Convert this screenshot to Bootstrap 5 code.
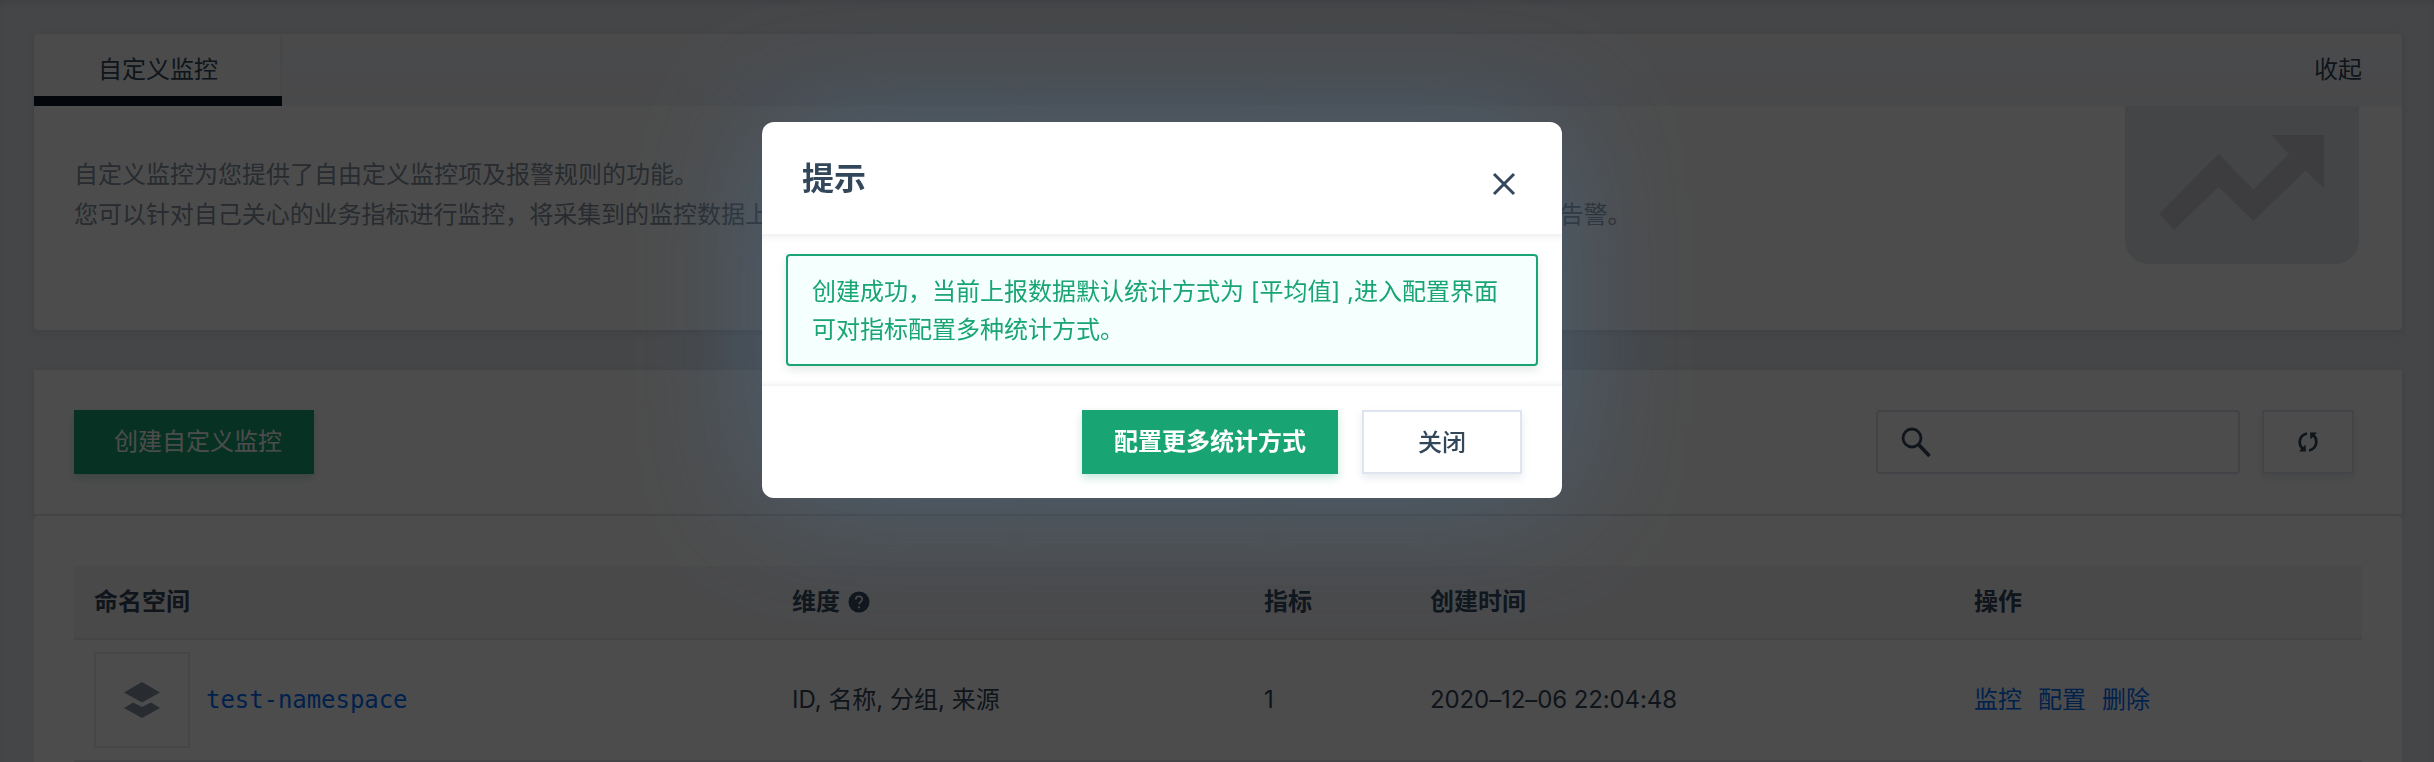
<!DOCTYPE html>
<html lang="zh-CN">
<head>
<meta charset="utf-8">
<title>自定义监控</title>
<link rel="stylesheet" href="https://cdn.jsdelivr.net/npm/bootstrap@5.3.0/dist/css/bootstrap.min.css">
<style>
body{font-family:"Inter","Noto Sans CJK SC",sans-serif;font-size:24px;line-height:40px;color:#33475b;background:#e6e9ee;height:762px;overflow:hidden}
.page-area{padding:34px 32px 0 34px;box-shadow:inset 0 4px 6px -2px rgba(30,50,80,.12)}
.panel{background:#fff;border-radius:4px;box-shadow:0 2px 6px rgba(30,50,80,.12);overflow:hidden}
.intro{height:296px;margin-bottom:40px}
.intro-head{height:72px;background:linear-gradient(#f8f9fb,#f2f4f9)}
.tab-on{width:248px;background:#fafbfc;border-right:2px solid #eceef2;position:relative;line-height:72px;padding-left:2px}
.tab-on::after{content:"";position:absolute;left:0;right:-2px;bottom:0;height:10px;background:#0d1828}
.fold{padding-right:40px;line-height:72px}
.intro-text{padding-left:40px;padding-top:49px;color:#8592a0}
.long-line{letter-spacing:-.04px}
.trend{width:234px;height:158px;margin-right:43px}
.toolbar-row{height:146px;border-bottom:2px solid #dfe3ea;padding:0 48px 0 40px;border-radius:0}
.btn-box{height:64px;border-radius:0;font-size:24px;line-height:24px;padding:0}
.btn-go{background:#18a573;color:#fff;box-shadow:0 4px 8px rgba(24,165,115,.25)}
.btn-plain{background:#fff;color:#33475b;border:2px solid #dfe5ee;box-shadow:0 4px 8px rgba(60,80,120,.12)}
.search-box{width:364px;height:64px;border:2px solid #dddfea;border-radius:4px;padding-left:22px}
.list-panel{height:246px;padding:50px 40px 0;box-shadow:none;border-bottom-left-radius:0;border-bottom-right-radius:0}
.grid-row{display:grid;grid-template-columns:698px 472px 166px 544px 1fr;align-items:center;padding-left:20px;border-bottom:2px solid #e3e6ea}
.grid-head{height:74px;background:#f3f5f9;font-weight:600}
.grid-item{height:122px}
.ns-icon{width:96px;height:96px;border:2px solid #e8eaee}
.ns-link{font-family:"DejaVu Sans Mono",monospace;margin-left:16px;letter-spacing:-.06px}
.grid-row a{color:#006eff;text-decoration:none}
.stamp{letter-spacing:-.1px}
.mask{background:rgba(0,0,0,.7)}
.dialog-pos{left:762px;top:122px;width:800px}
.dialog-box{height:376px;border:0;border-radius:12px;box-shadow:0 0 128px rgba(75,114,152,.54);color:#33475b;overflow:visible}
.dialog-head{height:112px;padding:2px 46px 0 40px}
.dialog-mid{height:152px;padding:20px 24px;box-shadow:inset 0 8px 8px -6px rgba(0,0,0,.08),inset 0 -6px 6px -5px rgba(0,0,0,.08)}
.dialog-foot{height:112px;padding:0 40px;gap:24px}
.notice{height:112px;border:2px solid #18a573;border-radius:4px;background:#f5fffd;color:#18a573;padding:17px 24px;line-height:38px;box-shadow:0 4px 8px rgba(24,80,60,.12);white-space:nowrap}
.title-text{font-size:32px;font-weight:600}
</style>
<script src="https://cdn.jsdelivr.net/npm/bootstrap@5.3.0/dist/js/bootstrap.bundle.min.js"></script>
</head>
<body>
<div class="page-area">
  <section class="panel intro">
    <div class="intro-head d-flex justify-content-between">
      <div class="tab-on text-center">自定义监控</div>
      <div class="fold">收起</div>
    </div>
    <div class="d-flex justify-content-between">
      <div class="intro-text text-nowrap">自定义监控为您提供了自由定义监控项及报警规则的功能。<br><span class="long-line">您可以针对自己关心的业务指标进行监控，将采集到的监控数据上报至云监控平台，并为已上报的监控指标设置相应的报警规则，来接收异常告警。</span></div>
      <svg class="trend" viewBox="0 0 234 158"><rect y="-76" width="234" height="234" rx="24" fill="#e3e6ea"/><path fill="#cccdd2" d="M34 108 93.500 48 128.500 83.500 164 48 146 29H199V82L180.500 64.500 128.500 115 93.500 81 49 124Z"/></svg>
    </div>
  </section>
  <section class="panel toolbar-row d-flex align-items-center">
    <button class="btn btn-box btn-go" style="width:240px;padding-left:8px">创建自定义监控</button>
    <div class="search-box ms-auto d-flex align-items-center">
      <svg width="32" height="32" viewBox="0 0 32 32" fill="none" stroke="#33475b"><circle cx="12" cy="12" r="9" stroke-width="2.800"/><path d="m18.500 18.500 11 11.500" stroke-width="3.600"/></svg>
    </div>
    <button class="btn btn-box btn-plain d-flex align-items-center justify-content-center" style="width:92px;margin-left:22px">
      <svg width="20" height="20" viewBox="0 0 20 20" fill="none" stroke="#33475b" stroke-width="2.800"><path d="M9 1.500C1.500 3 -.5 11.500 4.500 17"/><path d="M11 18.500C18.500 17 20.500 8.500 15.500 3"/><path fill="#33475b" stroke="none" d="M12 .5h7L12.500 7.500ZM8 19.500H1L7.500 12.500Z"/></svg>
    </button>
  </section>
  <section class="panel list-panel">
    <div class="grid-row grid-head">
      <div>命名空间</div>
      <div class="d-flex align-items-center">维度<svg class="ms-2" width="22" height="22" viewBox="0 0 22 22"><circle cx="11" cy="11" r="10.500" fill="#33475b"/><path d="M7.800 8.500c0-4.300 6.500-4.200 6.500-.2 0 2.500-3.200 2.600-3.200 5" fill="none" stroke="#f3f5f9" stroke-width="1.600"/><circle cx="11" cy="16.300" r="1.100" fill="#f3f5f9"/></svg></div>
      <div>指标</div><div>创建时间</div><div>操作</div>
    </div>
    <div class="grid-row grid-item">
      <div class="d-flex align-items-center">
        <div class="ns-icon d-flex align-items-center justify-content-center"><svg width="36" height="36" viewBox="0 0 36 36" fill="#8592a0"><path d="M18 0 36 10.500 18 20.500 0 10.500ZM0 26 9 20.500 18 25 27 20.500 36 26 18 36Z"/></svg></div>
        <a href="#" class="ns-link">test-namespace</a>
      </div>
      <div>ID, 名称, 分组, 来源</div><div>1</div><div class="stamp">2020–12–06 22:04:48</div>
      <div class="d-flex gap-3"><a href="#">监控</a><a href="#">配置</a><a href="#">删除</a></div>
    </div>
  </section>
</div>
<div class="mask position-fixed top-0 start-0 w-100 h-100"></div>
<div class="dialog-pos position-fixed">
  <div class="modal-content dialog-box bg-white">
    <div class="dialog-head d-flex align-items-center justify-content-between">
      <div class="title-text">提示</div>
      <svg width="24" height="24" viewBox="0 0 24 24" stroke="#33475b" stroke-width="3" style="margin-top:10px"><path d="m2 2 20 20M22 2 2 22"/></svg>
    </div>
    <div class="dialog-mid"><div class="notice">创建成功，当前上报数据默认统计方式为 [平均值] ,进入配置界面<br>可对指标配置多种统计方式。</div></div>
    <div class="dialog-foot d-flex align-items-center justify-content-end">
      <button class="btn btn-box btn-go fw-semibold" style="width:256px">配置更多统计方式</button>
      <button class="btn btn-box btn-plain fw-medium" style="width:160px;padding-top:2px">关闭</button>
    </div>
  </div>
</div>
</body>
</html>
